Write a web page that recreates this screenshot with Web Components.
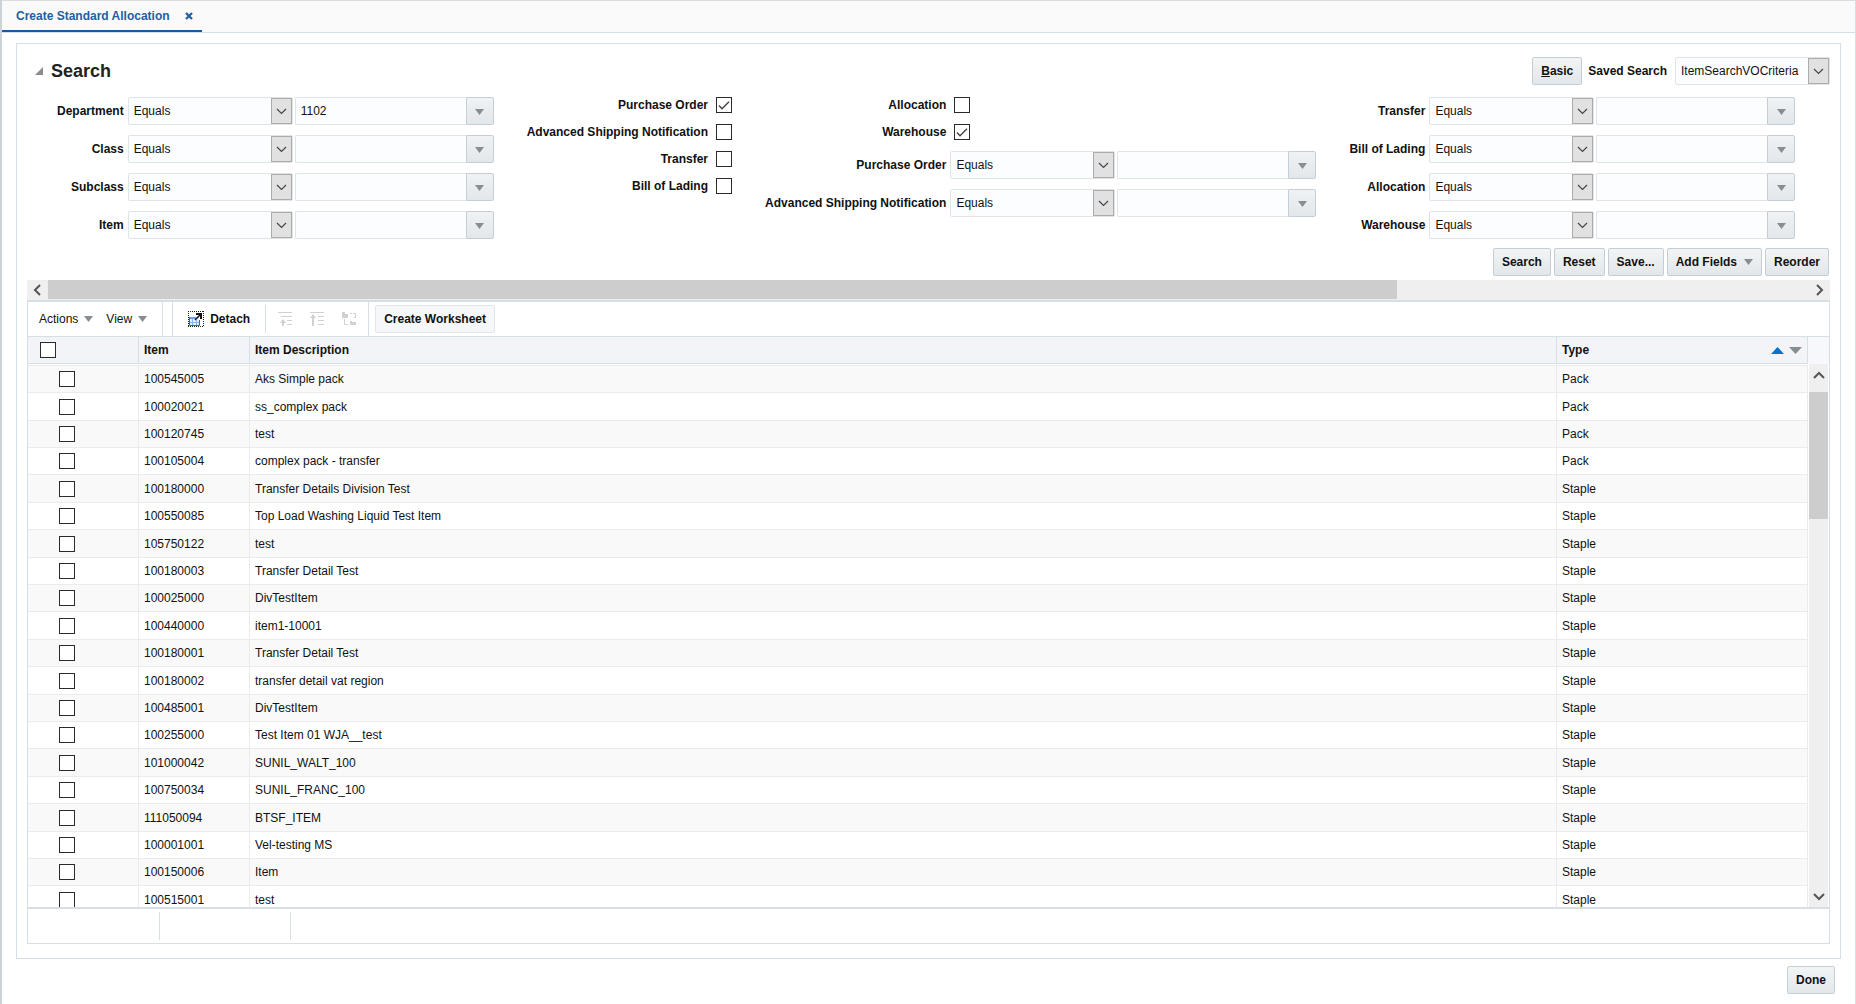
<!DOCTYPE html>
<html lang="en">
<head>
<meta charset="utf-8">
<meta name="viewport" content="width=device-width, initial-scale=1">
<title>Create Standard Allocation</title>
<style>
  body {
    margin: 0;
    color: #111;
    background: #fff;
    font: 12px/16px "Liberation Sans", Arial, sans-serif;
  }
</style>
</head>
<body>

<allocation-page>
  <tab-bar slot="tabs" label="Create Standard Allocation"></tab-bar>

  <search-panel slot="search" heading="Search">
    <criteria-group>
      <criteria-field label="Department" value="1102"></criteria-field>
      <criteria-field label="Class"></criteria-field>
      <criteria-field label="Subclass"></criteria-field>
      <criteria-field label="Item"></criteria-field>
    </criteria-group>
    <criteria-group>
      <check-field label="Purchase Order" checked></check-field>
      <check-field label="Advanced Shipping Notification"></check-field>
      <check-field label="Transfer"></check-field>
      <check-field label="Bill of Lading"></check-field>
    </criteria-group>
    <criteria-group>
      <check-field label="Allocation"></check-field>
      <check-field label="Warehouse" checked></check-field>
      <criteria-field label="Purchase Order"></criteria-field>
      <criteria-field label="Advanced Shipping Notification"></criteria-field>
    </criteria-group>
    <criteria-group>
      <criteria-field label="Transfer"></criteria-field>
      <criteria-field label="Bill of Lading"></criteria-field>
      <criteria-field label="Allocation"></criteria-field>
      <criteria-field label="Warehouse"></criteria-field>
    </criteria-group>

    <push-button slot="actions">Search</push-button>
    <push-button slot="actions">Reset</push-button>
    <push-button slot="actions">Save...</push-button>
    <push-button slot="actions" menu>Add Fields</push-button>
    <push-button slot="actions">Reorder</push-button>
  </search-panel>

  <scroll-bar slot="search"></scroll-bar>

  <item-results slot="results">
    <results-toolbar slot="toolbar"></results-toolbar>
  </item-results>

  <push-button slot="footer">Done</push-button>
</allocation-page>

<script>
/* shared pieces */

const CHECKBOX_CSS = `
  input[type=checkbox] {
    appearance: none;
    flex: none;
    box-sizing: border-box;
    width: 16px;
    height: 16px;
    margin: 0;
    border: 1px solid #2b2b2b;
    background: #fff;
  }
  input[type=checkbox]:checked {
    background: #fff url("data:image/svg+xml,%3Csvg xmlns='http://www.w3.org/2000/svg' viewBox='0 0 14 14'%3E%3Cpath d='M2 7.5l3 3.2 7-7' fill='none' stroke='%23444' stroke-width='1.4'/%3E%3C/svg%3E") center / 14px 14px no-repeat;
  }
`;

const SELECT_CSS = `
  .select {
    box-sizing: border-box;
    display: grid;
    grid-template-columns: 1fr 21px;
    height: 28px;
    border: 1px solid #dfe4e7;
    border-radius: 2px;
    background: #fcfdfe;
  }
  .select select {
    grid-area: 1 / 1 / 2 / 3;
    appearance: none;
    min-width: 0;
    margin: 0;
    padding: 0 26px 0 5px;
    border: 0;
    color: #111;
    background: none;
    font: inherit;
  }
  .select .knob {
    grid-area: 1 / 2;
    box-sizing: border-box;
    display: grid;
    place-items: center;
    border: 1px solid #acacac;
    background: #e1e1e1;
    pointer-events: none;
  }
`;

const CHEVRON = `<svg width="11" height="7" viewBox="0 0 11 7" aria-hidden="true"><path d="M1 1l4.5 4.5L10 1" fill="none" stroke="#444" stroke-width="1.2"/></svg>`;
const ARROW_DOWN = `<svg width="9" height="6" viewBox="0 0 9 6" aria-hidden="true"><path d="M0 0h9L4.5 6z" fill="#878d91"/></svg>`;

/* page frame */

class AllocationPage extends HTMLElement {
  constructor() {
    super();
    this.attachShadow({ mode: "open" }).innerHTML = `
<style>
  :host {
    box-sizing: border-box;
    display: flex;
    flex-direction: column;
    height: 100vh;
    border-left: 2px solid #cdd2d7;
    border-right: 1px solid #d6dfe6;
  }
  main {
    flex: 1;
    min-height: 0;
    display: flex;
    flex-direction: column;
    margin: 10px 14px 7px;
    padding: 13px 10px 14px;
    border: 1px solid #d6dfe6;
  }
  footer {
    display: flex;
    justify-content: flex-end;
    padding: 0 20px 10px;
  }
</style>
<slot name="tabs"></slot>
<main>
  <slot name="search"></slot>
  <slot name="results"></slot>
</main>
<footer><slot name="footer"></slot></footer>`;
  }
}

class TabBar extends HTMLElement {
  constructor() {
    super();
    const label = this.getAttribute("label");
    this.attachShadow({ mode: "open" }).innerHTML = `
<style>
  :host {
    display: flex;
    box-sizing: border-box;
    height: 33px;
    border-top: 1px solid #dcdcdc;
    border-bottom: 1px solid #d6dfe6;
    background: #fafafa;
  }
  .tab {
    display: flex;
    align-items: center;
    gap: 15px;
    padding: 0 9px 0 14px;
    border-bottom: 2px solid #145c9e;
  }
  a {
    color: #1f5f9f;
    font-weight: bold;
    text-decoration: none;
  }
  button {
    display: flex;
    margin: 0;
    padding: 0;
    border: 0;
    background: none;
  }
</style>
<div class="tab">
  <a href="#">${label}</a>
  <button type="button" aria-label="Close">
    <svg width="8" height="8" viewBox="0 0 8 8"><path d="M1 1l6 6M7 1L1 7" stroke="#1f5f9f" stroke-width="2.2"/></svg>
  </button>
</div>`;
  }
}

class PushButton extends HTMLElement {
  constructor() {
    super();
    const menu = this.hasAttribute("menu");
    this.attachShadow({ mode: "open" }).innerHTML = `
<style>
  :host { display: inline-block; }
  button {
    box-sizing: border-box;
    display: flex;
    align-items: center;
    gap: 7px;
    height: 28px;
    margin: 0;
    padding: 0 8px;
    border: 1px solid #c4ced7;
    border-radius: 2px;
    color: #111;
    background: linear-gradient(#f2f4f5, #e3e7ea);
    font: inherit;
    font-weight: bold;
    white-space: nowrap;
  }
  :host([flat]) button {
    border-color: #e1e6ea;
    background: #f5f7f9;
  }
</style>
<button type="button"><span><slot></slot></span>${menu ? ARROW_DOWN : ""}</button>`;
  }
}

/* search criteria */

class SearchPanel extends HTMLElement {
  constructor() {
    super();
    this.attachShadow({ mode: "open" }).innerHTML = `
<style>
  :host { display: block; }
  header {
    display: flex;
    align-items: center;
    padding-left: 8px;
  }
  h1 {
    flex: 1;
    margin: 0 0 0 8px;
    font-size: 18px;
    line-height: 28px;
    color: #222;
  }
  .toggle {
    display: flex;
    margin: 0;
    padding: 0;
    border: 0;
    background: none;
  }
  label {
    margin: 0 8px 0 6px;
    font-weight: bold;
  }
  .select { width: 155px; }
  .groups {
    display: flex;
    gap: 33px;
    margin: 12px 0 9px 30px;
  }
  .actions {
    display: flex;
    justify-content: flex-end;
    gap: 3px;
    padding: 0 1px 4px 0;
  }
  ${SELECT_CSS}
</style>
<header>
  <button class="toggle" type="button" aria-label="Collapse">
    <svg width="8" height="8" viewBox="0 0 8 8"><path d="M8 0v8H0z" fill="#878d91"/></svg>
  </button>
  <h1>${this.getAttribute("heading")}</h1>
  <push-button><u>B</u>asic</push-button>
  <label for="saved">Saved Search</label>
  <div class="select">
    <select id="saved"><option>ItemSearchVOCriteria</option></select>
    <span class="knob">${CHEVRON}</span>
  </div>
</header>
<div class="groups"><slot></slot></div>
<div class="actions"><slot name="actions"></slot></div>`;
  }
}

// two columns, labels and controls, shared by every field inside
class CriteriaGroup extends HTMLElement {
  constructor() {
    super();
    this.attachShadow({ mode: "open" }).innerHTML = `
<style>
  :host {
    display: grid;
    grid-template-columns: max-content max-content;
    column-gap: 4px;
    align-content: start;
  }
</style>
<slot></slot>`;
  }
}

class CriteriaField extends HTMLElement {
  constructor() {
    super();
    const label = this.getAttribute("label");
    const value = this.getAttribute("value") || "";
    this.attachShadow({ mode: "open" }).innerHTML = `
<style>
  :host { display: contents; }
  label {
    font-weight: bold;
    line-height: 28px;
    text-align: right;
  }
  .controls {
    display: flex;
    gap: 2px;
    margin-bottom: 10px;
  }
  :host(:last-child) .controls { margin-bottom: 0; }
  .select { width: 165px; }
  .combo {
    box-sizing: border-box;
    display: flex;
    width: 199px;
    height: 28px;
  }
  .combo input {
    flex: 1;
    min-width: 0;
    box-sizing: border-box;
    margin: 0;
    padding: 0 5px;
    border: 1px solid #dfe4e7;
    border-right: 0;
    border-radius: 2px 0 0 2px;
    color: #111;
    background: #fcfdfe;
    font: inherit;
  }
  .combo button {
    box-sizing: border-box;
    display: grid;
    place-items: center;
    width: 28px;
    margin: 0;
    padding: 2px 0 0;
    border: 1px solid #c4ced7;
    border-radius: 0 2px 2px 0;
    background: linear-gradient(#f0f2f4, #e3e7ea);
  }
  ${SELECT_CSS}
</style>
<label for="operator">${label}</label>
<div class="controls">
  <div class="select">
    <select id="operator"><option>Equals</option></select>
    <span class="knob">${CHEVRON}</span>
  </div>
  <div class="combo">
    <input type="text" value="${value}" aria-label="${label} value">
    <button type="button" aria-label="${label} list">${ARROW_DOWN}</button>
  </div>
</div>`;
  }
}

class CheckField extends HTMLElement {
  constructor() {
    super();
    const checked = this.hasAttribute("checked") ? "checked" : "";
    this.attachShadow({ mode: "open" }).innerHTML = `
<style>
  :host { display: contents; }
  label {
    font-weight: bold;
    text-align: right;
  }
  .box {
    display: flex;
    margin: 0 0 11px 4px;
  }
  ${CHECKBOX_CSS}
</style>
<label for="check">${this.getAttribute("label")}</label>
<div class="box"><input id="check" type="checkbox" ${checked}></div>`;
  }
}

/* scroll bars: horizontal by default, upright with the "vertical" attribute */

class ScrollBar extends HTMLElement {
  constructor() {
    super();
    const vertical = this.hasAttribute("vertical");
    const back = vertical ? "M1 7l5-5 5 5" : "M7 1L2 6l5 5";
    const ahead = vertical ? "M1 2l5 5 5-5" : "M2 1l5 5-5 5";
    const size = vertical ? [12, 9] : [9, 12];
    const icon = (d) =>
      `<svg width="${size[0]}" height="${size[1]}" viewBox="0 0 ${size[0]} ${size[1]}"><path d="${d}" fill="none" stroke="#555" stroke-width="2"/></svg>`;
    this.attachShadow({ mode: "open" }).innerHTML = `
<style>
  :host {
    flex: none;
    display: flex;
    height: 20px;
    background: #efefef;
  }
  :host([vertical]) {
    flex-direction: column;
    width: 19px;
    height: auto;
  }
  button {
    flex: none;
    display: grid;
    place-items: center;
    width: 21px;
    height: 19px;
    margin: 0;
    padding: 0;
    border: 0;
    background: none;
  }
  :host([vertical]) button {
    box-sizing: border-box;
    width: 19px;
    height: 28px;
    padding-bottom: 6px;
  }
  :host([vertical]) button:last-child { padding: 6px 0 0; }
  .track { flex: 1; }
  .thumb {
    width: 76.6%;
    height: 19px;
    background: #cdcdcd;
  }
  :host([vertical]) .thumb {
    width: 19px;
    height: 26%;
  }
</style>
<button type="button" aria-label="Scroll back">${icon(back)}</button>
<div class="track"><div class="thumb"></div></div>
<button type="button" aria-label="Scroll ahead">${icon(ahead)}</button>`;
  }
}

/* results */

class ResultsToolbar extends HTMLElement {
  constructor() {
    super();
    this.attachShadow({ mode: "open" }).innerHTML = `
<style>
  :host {
    display: flex;
    align-items: stretch;
    height: 34px;
    border-bottom: 1px solid #d6dfe6;
  }
  .part {
    display: flex;
    align-items: center;
    border-right: 1px solid #d6dfe6;
  }
  .menus {
    gap: 13px;
    padding: 0 15px 0 11px;
  }
  .spacer { width: 9px; }
  .tools { padding-left: 15px; }
  .icons {
    display: flex;
    align-items: center;
    gap: 18px;
    height: 28px;
    margin-left: 15px;
    padding: 0 12px;
    border-left: 1px solid #d6dfe6;
  }
  button {
    display: flex;
    align-items: center;
    gap: 6px;
    margin: 0;
    padding: 0;
    border: 0;
    color: #111;
    background: none;
    font: inherit;
  }
  .detach { font-weight: bold; }
  push-button {
    align-self: center;
    margin-left: 6px;
  }
</style>
<div class="part menus">
  <button type="button">Actions ${ARROW_DOWN}</button>
  <button type="button">View ${ARROW_DOWN}</button>
</div>
<div class="part spacer"></div>
<div class="part tools">
  <button class="detach" type="button">
    <svg width="16" height="16" viewBox="0 0 16 16" aria-hidden="true">
      <path d="M.5 0v16M15.5 0v16M0 .5h16M0 15.5h16" stroke="#222" stroke-dasharray="1 1"/>
      <path d="M2 6h9v8H2z" fill="#e6f0fc"/>
      <path d="M1 6h7v2H1z" fill="#6fa0e0"/>
      <path d="M1.500 6v8.500h10V9" fill="none" stroke="#2f66c0"/>
      <path d="M2 11.500h9M4.500 8v6M8.500 9v5" stroke="#8db4ea"/>
      <path d="M7 9l5-5" stroke="#111" stroke-width="1.5"/>
      <path d="M8 2h6v6h-2V4H8z" fill="#111"/>
    </svg>
    Detach
  </button>
  <div class="icons">
    <button type="button" aria-label="Go up" disabled>
      <svg width="14" height="14" viewBox="0 0 14 14"><path d="M0 .5h14M3 4.5h11M9 8.5h5M9 12.500h5" stroke="#cfd2d4"/><path d="M5 7l3 4H6v3H4v-3H2z" fill="#cfd2d4"/></svg>
    </button>
    <button type="button" aria-label="Go to top" disabled>
      <svg width="14" height="14" viewBox="0 0 14 14"><path d="M0 .5h14M8 4.5h6M8 8.5h6M8 12.5h6" stroke="#cfd2d4"/><path d="M3 2l3 4H4v8H2V6H0z" fill="#cfd2d4"/></svg>
    </button>
    <button type="button" aria-label="Show as top" disabled>
      <svg width="14" height="14" viewBox="0 0 14 14"><path d="M0 0h3v2h3v4H0zM8 9h2v1h4v3H8z" fill="#cfd2d4"/><path d="M2.500 7v5.500H6M8 1.500h2M11 1.500h2.500V6M12 5.500h2" fill="none" stroke="#cfd2d4"/></svg>
    </button>
  </div>
</div>
<push-button flat>Create Worksheet</push-button>`;
  }
}

const ITEMS = [
  ["100545005", "Aks Simple pack", "Pack"],
  ["100020021", "ss_complex pack", "Pack"],
  ["100120745", "test", "Pack"],
  ["100105004", "complex pack - transfer", "Pack"],
  ["100180000", "Transfer Details Division Test", "Staple"],
  ["100550085", "Top Load Washing Liquid Test Item", "Staple"],
  ["105750122", "test", "Staple"],
  ["100180003", "Transfer Detail Test", "Staple"],
  ["100025000", "DivTestItem", "Staple"],
  ["100440000", "item1-10001", "Staple"],
  ["100180001", "Transfer Detail Test", "Staple"],
  ["100180002", "transfer detail vat region", "Staple"],
  ["100485001", "DivTestItem", "Staple"],
  ["100255000", "Test Item 01 WJA__test", "Staple"],
  ["101000042", "SUNIL_WALT_100", "Staple"],
  ["100750034", "SUNIL_FRANC_100", "Staple"],
  ["111050094", "BTSF_ITEM", "Staple"],
  ["100001001", "Vel-testing MS", "Staple"],
  ["100150006", "Item", "Staple"],
  ["100515001", "test", "Staple"],
];

class ItemResults extends HTMLElement {
  constructor() {
    super();
    this.attachShadow({ mode: "open" }).innerHTML = `
<style>
  :host {
    flex: 1;
    min-height: 0;
    display: flex;
    flex-direction: column;
    border: 1px solid #d6dfe6;
    border-top-width: 2px;
  }
  .view {
    flex: 1;
    min-height: 0;
    display: flex;
    border-bottom: 2px solid #d6dfe6;
  }
  .rows {
    flex: 1;
    overflow: hidden;
  }
  table {
    width: 100%;
    border-spacing: 0;
    table-layout: fixed;
  }
  th, td {
    box-sizing: border-box;
    height: 27px;
    padding: 0 5px;
    text-align: left;
    white-space: nowrap;
  }
  th {
    border-right: 1px solid #d6dfe6;
    border-bottom: 1px solid #d6dfe6;
    background: #f2f4f8;
  }
  td {
    border-right: 1px solid #ebebeb;
    border-bottom: 1px solid #ebebeb;
  }
  tbody::before {
    content: "";
    display: table-row;
    height: 1px;
  }
  tbody tr:first-child td {
    height: 28px;
    border-top: 1px solid #ebebeb;
  }
  tbody tr:nth-child(odd) { background: #f9f9f9; }
  tbody tr:nth-child(5n + 2) td, tbody tr:nth-child(5n) td { height: 28px; }
  .pick { width: 111px; }
  .item { width: 111px; }
  .type { width: 251px; }
  th.pick { padding-left: 12px; }
  td.pick { padding-left: 31px; }
  th input, td input { display: block; }
  .sortable {
    display: flex;
    align-items: center;
    gap: 5px;
  }
  .sortable span { flex: 1; }
  .sortable button {
    display: flex;
    margin: 0;
    padding: 0;
    border: 0;
    background: none;
  }
  .side {
    display: flex;
    flex-direction: column;
    width: 21px;
  }
  .corner {
    height: 27px;
    background: #f7f8fc;
  }
  .side scroll-bar {
    flex: 1;
    margin: 0 1px;
  }
  .status {
    display: flex;
    height: 34px;
    padding-left: 1px;
  }
  .status span {
    width: 130px;
    height: 28px;
    margin-top: 3px;
    border-right: 1px solid #d6dfe6;
  }
  ${CHECKBOX_CSS}
</style>
<slot name="toolbar"></slot>
<div class="view">
  <div class="rows">
    <table>
      <thead>
        <tr>
          <th class="pick"><input type="checkbox" aria-label="Select all"></th>
          <th class="item">Item</th>
          <th>Item Description</th>
          <th class="type">
            <div class="sortable">
              <span>Type</span>
              <button type="button" aria-label="Sort ascending"><svg width="13" height="7" viewBox="0 0 13 7"><path d="M0 7h13L6.5 0z" fill="#0572ce"/></svg></button>
              <button type="button" aria-label="Sort descending"><svg width="13" height="7" viewBox="0 0 13 7"><path d="M0 0h13L6.5 7z" fill="#878d91"/></svg></button>
            </div>
          </th>
        </tr>
      </thead>
      <tbody>${this.buildRows()}</tbody>
    </table>
  </div>
  <div class="side">
    <div class="corner"></div>
    <scroll-bar vertical></scroll-bar>
  </div>
</div>
<div class="status"><span></span><span></span></div>`;
  }

  buildRows() {
    return ITEMS.map(([item, description, type]) => `
<tr>
  <td class="pick"><input type="checkbox" aria-label="Select ${item}"></td>
  <td>${item}</td>
  <td>${description}</td>
  <td>${type}</td>
</tr>`).join("");
  }
}

customElements.define("push-button", PushButton);
customElements.define("scroll-bar", ScrollBar);
customElements.define("tab-bar", TabBar);
customElements.define("criteria-field", CriteriaField);
customElements.define("check-field", CheckField);
customElements.define("criteria-group", CriteriaGroup);
customElements.define("search-panel", SearchPanel);
customElements.define("results-toolbar", ResultsToolbar);
customElements.define("item-results", ItemResults);
customElements.define("allocation-page", AllocationPage);
</script>
</body>
</html>
